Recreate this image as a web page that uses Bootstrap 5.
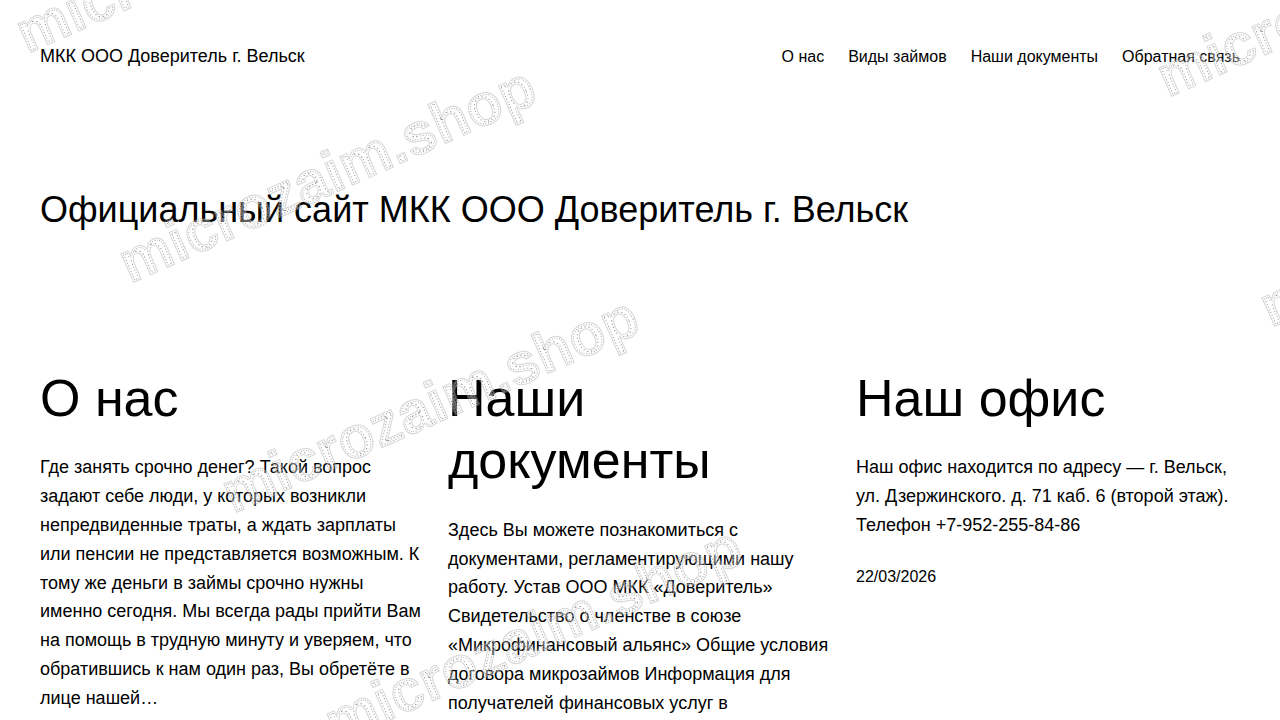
<!DOCTYPE html>
<html lang="ru">
<head>
<meta charset="utf-8">
<meta name="viewport" content="width=device-width, initial-scale=1">
<title>МКК ООО Доверитель г. Вельск</title>
<link rel="stylesheet" href="https://cdn.jsdelivr.net/npm/bootstrap@5.3.0/dist/css/bootstrap.min.css">
<style>
  body { font-family: "Liberation Sans", Arial, sans-serif; font-size: 18px; line-height: 1.6; color: #000; background: #fff; }
  .site-shell { padding: 0 40px; }
  .site-header { padding: 42px 0; }
  .site-header a, .post-date { color: #000; text-decoration: none; }
  .site-header a:hover, .post-date:hover { text-decoration: underline; }
  .site-menu, .post-date { font-size: 16px; }
  .site-header .site-menu { column-gap: 24px; }
  .page-title { font-size: 36px; line-height: 1.2; font-weight: 400; padding: 75px 0 136px; margin: 0; }
  .post-title { font-size: 52px; line-height: 1.2; font-weight: 400; margin-bottom: 24px; }
  .post-text { margin-bottom: 24px; }
  .post-grid { --bs-gutter-x: 24px; --bs-gutter-y: 48px; }
  .page-frame { height: 100vh; }
  .watermark { pointer-events: none; }
  .watermark text { font: 700 59px "Liberation Sans", Arial, sans-serif; stroke-linejoin: round; }
  .mark-edge { fill: #fff; stroke: #999; stroke-width: 1px; }
  .mark-dots { fill: none; stroke: #000; stroke-width: 5px; stroke-dasharray: 1 2; }
  .mark-inset { fill: #fff; stroke: #000; stroke-width: 3px; }
</style>
</head>
<body>
<div class="page-frame position-relative overflow-hidden">
  <div class="site-shell">
    <header class="site-header d-flex flex-wrap justify-content-between align-items-center">
      <a href="#">МКК ООО Доверитель г. Вельск</a>
      <nav aria-label="Меню">
        <ul class="site-menu list-unstyled d-flex flex-wrap mb-0">
          <li><a href="#about">О нас</a></li>
          <li><a href="#loans">Виды займов</a></li>
          <li><a href="#documents">Наши документы</a></li>
          <li><a href="#feedback">Обратная связь</a></li>
        </ul>
      </nav>
    </header>
    <main>
      <h1 class="page-title">Официальный сайт МКК ООО Доверитель г. Вельск</h1>
      <div class="row post-grid mt-0">
        <article class="col-md-4 mt-0" id="about">
          <h2 class="post-title">О нас</h2>
          <p class="post-text">Где занять срочно денег? Такой вопрос задают себе люди, у которых возникли непредвиденные траты, а ждать зарплаты или пенсии не представляется возможным. К тому же деньги в займы срочно нужны именно сегодня. Мы всегда рады прийти Вам на помощь в трудную минуту и уверяем, что обратившись к нам один раз, Вы обретёте в лице нашей…</p>
        </article>
        <article class="col-md-4 mt-0" id="documents">
          <h2 class="post-title">Наши документы</h2>
          <p class="post-text">Здесь Вы можете познакомиться с документами, регламентирующими нашу работу. Устав ООО МКК «Доверитель» Свидетельство о членстве в союзе «Микрофинансовый альянс» Общие условия договора микрозаймов Информация для получателей финансовых услуг в</p>
        </article>
        <article class="col-md-4 mt-0" id="office">
          <h2 class="post-title">Наш офис</h2>
          <p class="post-text">Наш офис находится по адресу — г. Вельск, ул. Дзержинского. д. 71 каб. 6 (второй этаж). Телефон +7-952-255-84-86</p>
          <a class="post-date d-block" href="#office"><time datetime="2026-03-22">22/03/2026</time></a>
        </article>
      </div>
    </main>
  </div>
  <svg class="watermark position-absolute top-0 start-0 w-100 h-100" aria-hidden="true">
    <defs>
      <!-- keeps the dotted line just inside the letter edge -->
      <mask id="inset" maskUnits="userSpaceOnUse" x="-10" y="-60" width="480" height="90">
        <text class="mark-inset">microzaim.shop</text>
      </mask>
      <g id="mark" transform="rotate(-24)" opacity=".4">
        <text class="mark-edge">microzaim.shop</text>
        <g mask="url(#inset)"><text class="mark-dots">microzaim.shop</text></g>
      </g>
    </defs>
    <use href="#mark" x="27" y="54"/>
    <use href="#mark" x="130" y="284"/>
    <use href="#mark" x="233" y="514"/>
    <use href="#mark" x="336" y="744"/>
    <use href="#mark" x="1168" y="98"/>
    <use href="#mark" x="1271" y="328"/>
  </svg>
</div>
<script src="https://cdn.jsdelivr.net/npm/bootstrap@5.3.0/dist/js/bootstrap.bundle.min.js"></script>
</body>
</html>
